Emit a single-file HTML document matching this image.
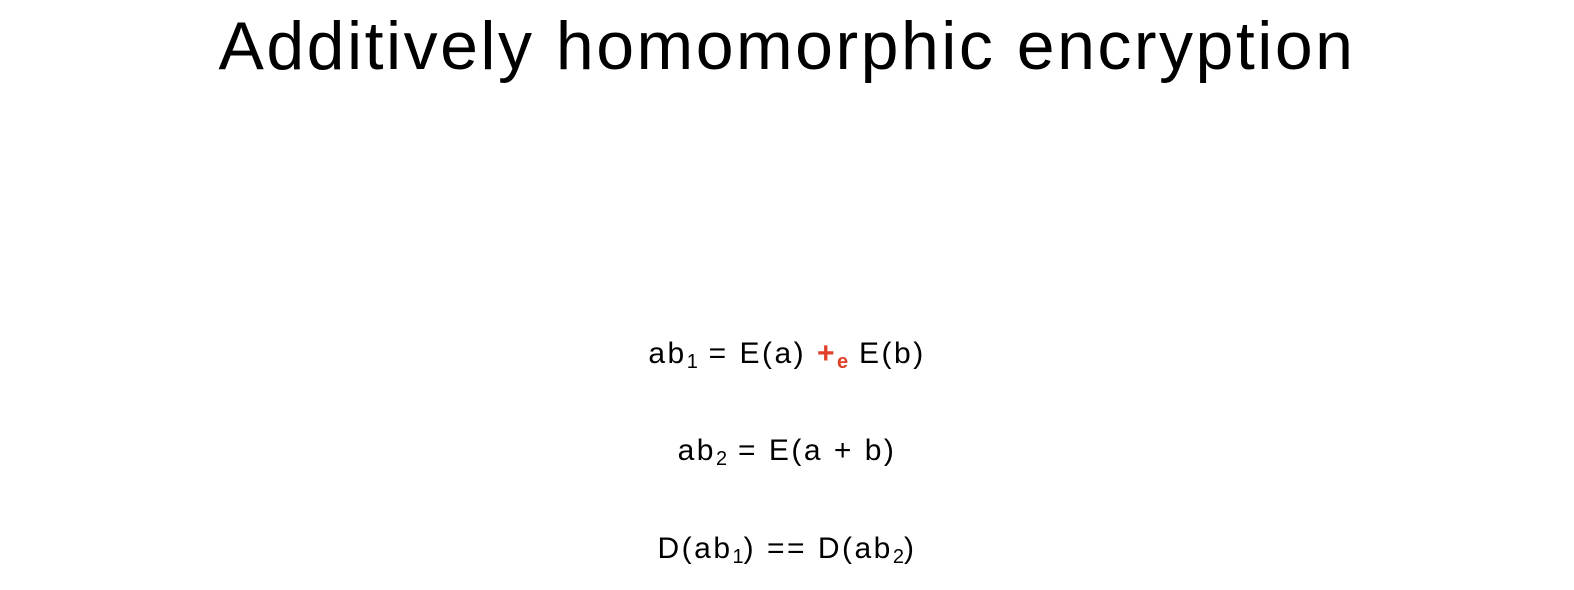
<!DOCTYPE html>
<html><head><style>
html,body{margin:0;padding:0;background:#fff;width:1574px;height:590px;overflow:hidden}
body{font-family:"Liberation Sans",sans-serif;color:#000;position:relative}
.t{position:absolute;left:0;width:1574px;text-align:center;white-space:nowrap}
h1{font-weight:normal;font-size:68px;top:7px;margin:0;letter-spacing:2.5px;left:-2px}
.e{font-size:30px;line-height:32px;letter-spacing:2.5px}
sub{font-size:20px;vertical-align:-5px;line-height:0;letter-spacing:0}
.r{color:#e0402a;font-weight:bold}
</style></head><body>
<h1 class="t">Additively homomorphic encryption</h1>
<div class="t e" style="top:338px">ab<sub>1</sub> = E(a) <span class="r">+<sub>e</sub></span> E(b)</div>
<div class="t e" style="top:435px">ab<sub>2</sub> = E(a + b)</div>
<div class="t e" style="top:533px">D(ab<sub>1</sub>) == D(ab<sub>2</sub>)</div>
</body></html>
